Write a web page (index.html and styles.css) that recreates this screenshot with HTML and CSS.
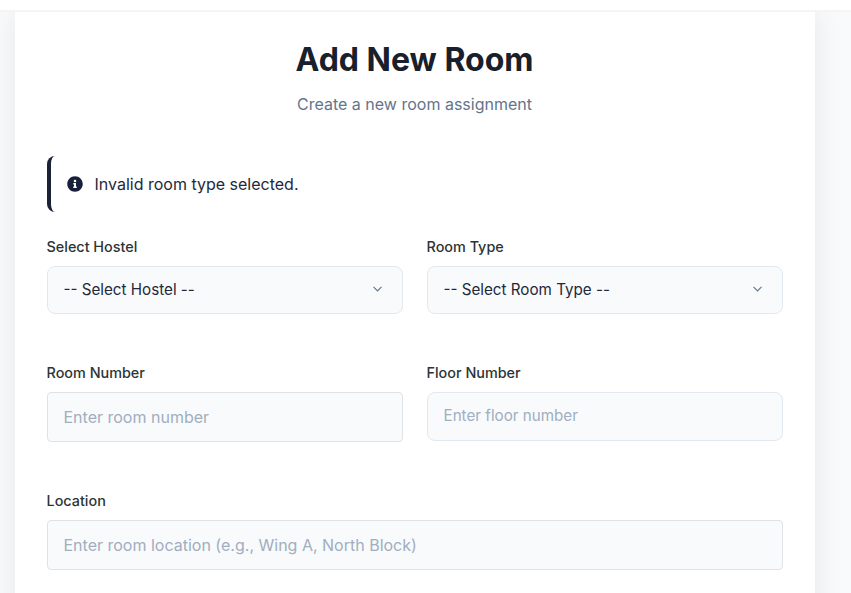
FILE: index.html
```html
<!DOCTYPE html>
<html lang="en">
<head>
<meta charset="utf-8">
<title>Add New Room</title>
<link rel="stylesheet" href="styles.css">
</head>
<body>
<header class="topbar"></header>
<main class="card">
  <h1 class="title">Add New Room</h1>
  <p class="subtitle">Create a new room assignment</p>
  <div class="alert">
    <svg class="alert-icon" viewBox="0 0 512 512"><path fill="currentColor" d="M256 8C119 8 8 119 8 256s111 248 248 248 248-111 248-248S393 8 256 8zm0 110a42 42 0 1 1 0 84 42 42 0 0 1 0-84zm56 254c0 7-5 12-12 12h-88c-7 0-12-5-12-12v-24c0-7 5-12 12-12h12v-64h-12c-7 0-12-5-12-12v-24c0-7 5-12 12-12h64c7 0 12 5 12 12v100h12c7 0 12 5 12 12v24z"/></svg>
    <span>Invalid room type selected.</span>
  </div>
  <form class="form">
    <div class="field">
      <label class="label" for="hostel">Select Hostel</label>
      <div class="select-wrap">
        <select class="control select" id="hostel"><option>-- Select Hostel --</option></select>
        <svg class="chevron" viewBox="0 0 10 6"><path d="M1 .9l4 4 4-4"/></svg>
      </div>
    </div>
    <div class="field">
      <label class="label" for="type">Room Type</label>
      <div class="select-wrap">
        <select class="control select" id="type"><option>-- Select Room Type --</option></select>
        <svg class="chevron" viewBox="0 0 10 6"><path d="M1 .9l4 4 4-4"/></svg>
      </div>
    </div>
    <div class="field">
      <label class="label" for="number">Room Number</label>
      <input class="control text" id="number" type="text" placeholder="Enter room number">
    </div>
    <div class="field">
      <label class="label" for="floor">Floor Number</label>
      <input class="control number" id="floor" type="number" placeholder="Enter floor number">
    </div>
    <div class="field wide">
      <label class="label" for="location">Location</label>
      <input class="control text" id="location" type="text" placeholder="Enter room location (e.g., Wing A, North Block)">
    </div>
  </form>
</main>
</body>
</html>
```
FILE: styles.css
```css
* { box-sizing: border-box; }
body {
  margin: 0;
  height: 593px;
  overflow: hidden;
  background: #f8fafc;
  font-family: Inter, "Liberation Sans", sans-serif;
  color: #1e293b;
}
.topbar {
  position: relative;
  z-index: 1;
  height: 12px;
  background: #fff;
  border-bottom: 2px solid #f5f5f6;
}
.card {
  width: 800px;
  height: 660px;
  margin: -12px 0 0 14.5px;
  padding: 41px 32px 40px;
  background: #fff;
  box-shadow: 0 10px 30px rgba(0, 0, 0, .08);
}
.title {
  margin: 0;
  font-size: 32px;
  font-weight: 700;
  line-height: 38px;
  text-align: center;
  color: #17202b;
}
.subtitle {
  margin: 13px 0 0;
  font-size: 16px;
  line-height: 24px;
  text-align: center;
  color: #64748b;
}
.alert {
  display: flex;
  align-items: center;
  gap: 12px;
  height: 56px;
  margin: 40px 0 24px;
  padding-left: 16px;
  border-left: 4px solid #1a2238;
  border-radius: 8px;
  font-size: 16px;
}
.alert-icon { width: 16px; height: 16px; color: #17203a; }
.form {
  display: grid;
  grid-template-columns: 1fr 1fr;
  grid-template-rows: 126px 128px auto;
  column-gap: 24px;
}
.wide { grid-column: 1 / -1; }
.label {
  display: block;
  margin-bottom: 8px;
  font-size: 14.4px;
  font-weight: 500;
  line-height: 22px;
  color: #2d3436;
}
.control {
  display: block;
  width: 100%;
  margin: 0;
  padding: 0 16px;
  border: 1px solid #e2e8f0;
  border-radius: 8px;
  outline: 0;
  background: #f8fafc;
  font-family: inherit;
  color: #1e293b;
}
.control::placeholder { color: #a0aec0; opacity: 1; }
.select-wrap { position: relative; }
.select { height: 48px; padding-bottom: 2px; appearance: none; font-size: 15.2px; }
.chevron {
  position: absolute;
  right: 20px;
  top: 20px;
  width: 11px;
  height: 6px;
  fill: none;
  stroke: #64748b;
  stroke-width: 1.1;
}
.text { height: 50px; border-color: #dfe3e6; border-radius: 4px; font-size: 16px; }
.number { height: 49px; padding-bottom: 2px; font-size: 15.2px; }
```
